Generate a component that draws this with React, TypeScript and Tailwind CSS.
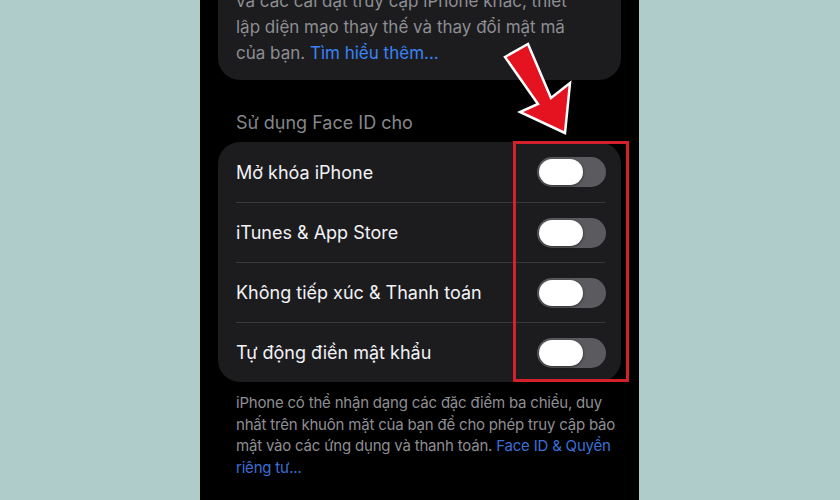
import React from "react";

const rows = [
  "Mở khóa iPhone",
  "iTunes & App Store",
  "Không tiếp xúc & Thanh toán",
  "Tự động điền mật khẩu",
];

function Toggle() {
  return (
    <div className="relative h-[30px] w-[69px] shrink-0 rounded-full bg-[#5b5b5f]">
      <div className="absolute left-[2px] top-[2px] h-[26px] w-[44px] rounded-full bg-white shadow-[0_1px_3px_rgba(0,0,0,0.5)]" />
    </div>
  );
}

export default function App() {
  return (
    <div
      className="flex h-[500px] w-[840px] justify-center overflow-hidden bg-[#afcccb]"
      style={{ fontFamily: "Inter, 'Noto Sans', sans-serif" }}
    >
      <div className="relative ml-[-1px] flex h-[500px] w-[439px] shrink-0 flex-col overflow-hidden bg-black px-[18px]">
        <div className="mt-[-40px] shrink-0 whitespace-nowrap rounded-[22px] bg-[#1c1c1e] px-[18px] pb-[14px] pt-[28px] text-[17px] leading-[26px] text-[#8e8e93]">
          <div>và các cài đặt truy cập iPhone khác, thiết</div>
          <div>lập diện mạo thay thế và thay đổi mật mã</div>
          <div>
            của bạn. <span className="text-[#3a82f6]">Tìm hiểu thêm...</span>
          </div>
        </div>

        <div className="mt-[32px] shrink-0 pl-[18px] text-[18px] leading-[22px] text-[#86868b]">
          Sử dụng Face ID cho
        </div>

        <div className="mt-[8px] shrink-0 overflow-hidden rounded-[22px] bg-[#1c1c1e]">
          {rows.map((r, i) => (
            <div key={r}>
              {i > 0 && <div className="ml-[18px] mr-[16px] h-px bg-[#38383a]" />}
              <div
                className={
                  i === 0
                    ? "flex h-[60px] items-center justify-between pl-[18px] pr-[15px]"
                    : "flex h-[59px] items-center justify-between pl-[18px] pr-[15px]"
                }
              >
                <span className="text-[18px] text-[#f2f2f7]">{r}</span>
                <Toggle />
              </div>
            </div>
          ))}
        </div>

        <div className="mt-[10px] shrink-0 whitespace-nowrap pl-[18px] text-[15px] leading-[21.7px] tracking-[-0.2px] text-[#8e8e93]">
          <div>iPhone có thể nhận dạng các đặc điểm ba chiều, duy</div>
          <div>nhất trên khuôn mặt của bạn để cho phép truy cập bảo</div>
          <div>
            mật vào các ứng dụng và thanh toán.{" "}
            <span className="text-[#3b6fd6]">Face ID &amp; Quyền</span>
          </div>
          <div className="text-[#3b6fd6]">riêng tư...</div>
        </div>

        <div className="absolute left-[313px] top-[141px] h-[241px] w-[116px] border-[3px] border-[#d4202a]" />

        <svg className="absolute left-0 top-0" width="439" height="500" viewBox="0 0 439 500">
          <polygon
            points="305,57 328,44 351,98 370,83 365,133 320,112 338,104"
            fill="#e5121f"
            stroke="#ffffff"
            strokeWidth="2.5"
            strokeLinejoin="miter"
          />
        </svg>
      </div>
    </div>
  );
}
